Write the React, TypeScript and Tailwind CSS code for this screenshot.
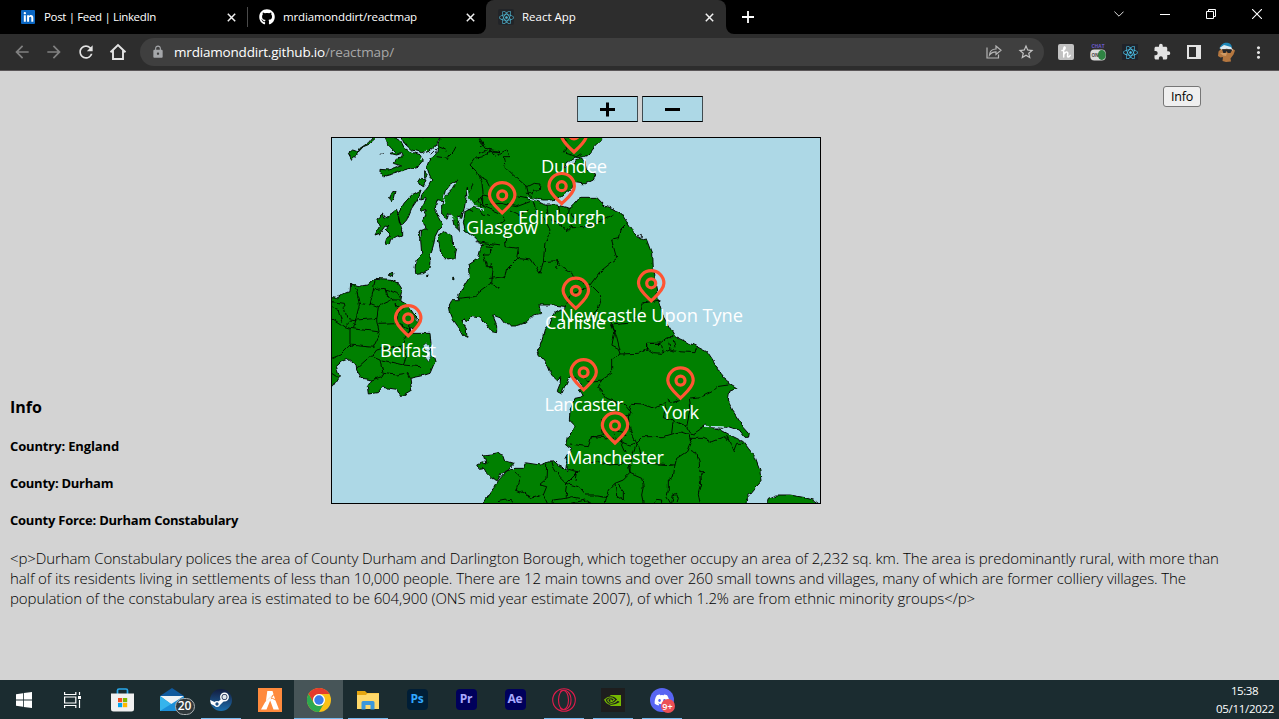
import type { ReactNode } from "react";
import { FaDiscord, FaGithub, FaLinkedinIn, FaReact, FaSteamSymbol } from "react-icons/fa";
import {
  MdArrowBack,
  MdArrowForward,
  MdExtension,
  MdLock,
  MdMoreVert,
  MdOutlineHome,
  MdRefresh,
  MdStarBorder,
} from "react-icons/md";
import { SiNvidia } from "react-icons/si";

/* ---------- Browser chrome ---------- */

function CloseGlyph() {
  return (
    <svg className="size-[9px] shrink-0" viewBox="0 0 9 9" stroke="#f1f1f1" strokeWidth="1.5">
      <path d="M.8.8l7.4 7.4M8.2.8L.8 8.2" />
    </svg>
  );
}

function TabStrip() {
  return (
    <div className="flex h-[34px] bg-black text-[11.5px] text-white">
      <div className="flex w-[247px] items-center pr-[11px] pl-[21px]">
        <span className="flex size-[14px] items-center justify-center rounded-[1px] bg-[#0a66c2]">
          <FaLinkedinIn className="size-[11px]" />
        </span>
        <span className="ml-[9px] flex-1 tracking-[-0.35px] whitespace-nowrap">Post | Feed | LinkedIn</span>
        <CloseGlyph />
      </div>
      <div className="my-[7px] w-px bg-[#4a4a4a]" />
      <div className="flex w-[238px] items-center pr-[11px] pl-[11px]">
        <FaGithub className="size-4" />
        <span className="ml-[8px] flex-1 tracking-[-0.16px] whitespace-nowrap">mrdiamonddirt/reactmap</span>
        <CloseGlyph />
      </div>
      <div className="relative flex w-[240px] items-center rounded-t-[8px] bg-[#2d2d2d] pr-[12px] pl-[12px]">
        <svg className="absolute bottom-0 -left-[8px] size-2" viewBox="0 0 8 8" fill="#2d2d2d">
          <path d="M8 0v8H0a8 8 0 0 0 8-8z" />
        </svg>
        <svg className="absolute -right-[8px] bottom-0 size-2" viewBox="0 0 8 8" fill="#2d2d2d">
          <path d="M0 0v8h8a8 8 0 0 1-8-8z" />
        </svg>
        <span className="flex size-4 items-center justify-center rounded-[2px] bg-[#222428]">
          <FaReact className="size-[15px] text-[#4fb6d1]" />
        </span>
        <span className="ml-[8px] flex-1 whitespace-nowrap">React App</span>
        <CloseGlyph />
      </div>
      <div className="flex flex-1 items-center pl-[16px]">
        <svg className="size-3" viewBox="0 0 12 12" stroke="#fff" strokeWidth="1.8">
          <path d="M6 0v12M0 6h12" />
        </svg>
      </div>
      <div className="flex h-[28px] items-center pr-[17px]">
        <svg className="w-[10px]" viewBox="0 0 10 6" fill="none" stroke="#ddd">
          <path d="M.4.6L5 5.2 9.6.6" />
        </svg>
        <div className="ml-[36px] h-px w-[10px] bg-white" />
        <svg className="ml-[36px] size-[10px]" viewBox="0 0 10 10" fill="none" stroke="#fff">
          <path d="M.5 2.500h7v7h-7zM2.500 2.500v-2h7v7h-2" />
        </svg>
        <svg className="ml-[36px] size-[10px]" viewBox="0 0 10 10" stroke="#fff" strokeWidth="1.1">
          <path d="M0 0l10 10M10 0L0 10" />
        </svg>
      </div>
    </div>
  );
}

function Toolbar() {
  return (
    <div className="flex h-[37px] items-center border-b border-[#5a5658] bg-[#2d2d2d] text-[#e3e3e3]">
      <div className="flex w-[140px] items-center pl-[12px]">
        <MdArrowBack className="size-5 text-[#808080]" />
        <MdArrowForward className="ml-[12px] size-5 text-[#808080]" />
        <MdRefresh className="ml-[12px] size-5" />
        <svg className="ml-[13px] size-[18px]" viewBox="0 0 18 18" fill="none" stroke="currentColor" strokeWidth="1.900">
          <path d="M1.500 9.200L9 2l7.500 7.200M4 7.500V16h10V7.500" />
        </svg>
      </div>
      <div className="flex h-7 w-[904px] items-center rounded-full bg-[#3f3f3f] pr-[9px] pl-[11px]">
        <MdLock className="size-[14px] text-[#a5a7aa]" />
        <p className="mt-px ml-[9px] flex-1 text-[13.5px] leading-none text-[#a8a8a8]">
          <span className="tracking-[-0.19px] text-white">mrdiamonddirt.github.io</span>
          <span className="tracking-[-0.1px]">/reactmap/</span>
        </p>
        <svg className="h-[14px] w-[16px]" viewBox="0 0 16 14" fill="none" stroke="#b5b5b5" strokeWidth="1.2">
          <path d="M1 2.500v10.500h11.500V9.500M3.500 10c.3-4 3-6 6.500-6V1l5 4.300-5 4.200V6.800C7.200 6.800 5 7.800 3.500 10z" />
        </svg>
        <MdStarBorder className="ml-[15px] size-[18px] text-[#c3c3c3]" />
      </div>
      <div className="ml-[14px] flex size-4 items-center justify-center rounded-[2px] bg-[#c1c1c1]">
        <svg className="size-3" viewBox="0 0 12 12" fill="none" stroke="#fff" strokeWidth="1.5" strokeLinecap="round">
          <path d="M2 4.500C4.500 4 5.500 2.500 5 1.300S3.300 2 3.700 5V11M3.800 8.500C5 5.500 8 5 7.800 7.500c-.2 2-.6 3.600.5 3.500.8 0 1.400-.7 1.900-1.600" />
        </svg>
      </div>
      <svg className="ml-4 h-[17px] w-4" viewBox="0 0 16 17">
        <text x="1.500" y="4.300" fontSize="4.800" fontWeight="700" fill="#6a5acd" textLength="13">
          CHAT
        </text>
        <rect x=".3" y="5.500" width="15.400" height="11" rx="4" fill="#dcdcdc" />
        <ellipse cx="11.800" cy="11" rx="3.900" ry="5" fill="#2f8443" />
        <text x="1.400" y="12.900" fontSize="4.500" fontWeight="700" fill="#444">
          ON
        </text>
      </svg>
      <div className="ml-4 flex size-4 items-center justify-center bg-[#20232a]">
        <FaReact className="size-[15px] text-[#4cc6ee]" />
      </div>
      <MdExtension className="ml-[15px] size-[18px]" />
      <svg className="ml-[16px] size-[14px]" viewBox="0 0 14 14">
        <path d="M0 0h14v14H0zM2 2v10h7V2z" fill="#e3e3e3" fillRule="evenodd" />
      </svg>
      <svg className="ml-[15px] size-5" viewBox="0 0 20 20">
        <path d="M5 7L2.500 9.500 2 14l2.500 1.500L7 15l-.5 4 3.500 1 5-.500-.5-3 3-4 1.500-4-3-2z" fill="#b5773f" />
        <path d="M4 11l3 2.500 3 .5 1-3z" fill="#d19a62" />
        <path d="M3.500 6.500C5 1.500 9 0 12.500 1c2.500.7 3.500 3 3.500 5l-5-1.500z" fill="#1d87b8" />
        <path d="M3.500 6L8 3l7 2 2 3.500-6-1.800-5.500.8z" fill="#dfeaf0" />
        <path d="M6 7.300h9.500l.500 1-1.500 2.700h-2.700L10.500 9 9.500 11H7.300z" fill="#22262b" />
      </svg>
      <MdMoreVert className="ml-[13px] size-[19px]" />
    </div>
  );
}

/* ---------- Map ---------- */

type Layer = { dx: number; dy: number; land?: string; lines?: string };

const MAINLAND =
  "M335 0L335 24 325 40 320 70 300 85 290 110 297 130 305 150 295 170 275 195 272 210 290 205 275 230 275 245 290 238 278 270 285 290 292 300 " +
  "275 300 272 330 275 370 258 395 255 415 258 430 280 428 300 415 303 395 300 380 310 350 315 320 325 300 338 285 325 262 315 240 320 212 " +
  "340 215 345 185 360 165 383 150 370 175 345 200 335 225 335 250 350 268 356 250 370 265 375 290 388 302 387 280 380 258 395 262 402 240 408 205 412 172 " +
  "412 200 430 227 458 238 430 232 405 245 400 280 405 300 425 315 440 330 455 345 450 365 445 385 415 405 418 440 405 460 385 500 385 512 365 512 358 525 360 545 " +
  "370 570 388 595 402 618 411 622 409 600 396 575 402 562 408 575 425 560 445 563 465 578 485 605 500 608 500 585 488 555 515 565 530 585 555 585 590 575 610 555 635 550 630 525 670 525 710 530 " +
  "675 550 660 580 645 595 630 650 622 660 630 680 655 710 665 735 680 750 692 740 690 765 682 785 695 792 705 770 720 740 735 740 745 750 755 765 765 775 745 780 760 800 735 805 " +
  "720 840 718 870 738 890 730 905 715 920 710 945 725 955 715 968 705 985 712 1005 710 1025 695 1010 685 1005 670 992 630 1005 585 998 580 1015 555 1015 530 1023 505 1052 495 1070 475 1095 450 1130 " +
  "1248 1130 1250 1105 1270 1080 1293 1055 1290 1020 1275 980 1255 955 1240 935 1200 915 1170 898 1125 888 1180 895 1195 890 1225 900 1245 925 1255 925 1258 910 1240 890 1210 845 1195 810 1200 780 1220 773 1190 755 1170 730 1150 695 1130 665 1090 645 1035 620 " +
  "1000 560 985 510 975 455 967 415 965 370 950 330 940 332 925 325 910 305 890 275 870 245 825 228 800 202 750 202 735 220 720 235 680 225 645 225 605 205 635 210 665 210 690 205 720 180 735 158 765 162 790 150 797 135 770 120 765 95 750 85 700 115 715 95 735 85 760 80 775 75 795 50 815 30 815 0Z";

const LAYERS: Layer[] = [
  {
    dx: 0,
    dy: 0,
    land:
      "M165 20L195 24 215 35 225 55 240 65 270 75 280 90 265 108 240 115 215 122 195 130 165 138 150 128 150 118 175 120 195 115 215 108 190 100 195 85 220 80 215 70 200 75 180 70 195 66 175 45ZM215 20L225 42 245 60 275 68 300 60 318 45 335 20ZM55 70L68 60 85 66 100 50 120 42 145 20 130 20 115 38 90 55 80 75 65 88ZM178 205L188 185 198 183 193 205 183 218ZM135 315L148 290 140 268 160 252 165 262 185 250 200 238 205 262 215 295 215 318 185 328 180 345 165 342 170 325 183 318 165 300 180 290 165 288 150 310ZM205 250L222 220 245 195 273 180 265 205 245 235 230 270 218 283 208 278ZM325 330L332 310 345 303 365 315 368 345 380 355 375 385 350 390 332 370ZM262 318L270 300 268 325ZM174 432L192 427 190 440ZM265 160L275 145 288 150 280 170ZM284 125L292 135 284 142ZM290 433h4v4h-4zM368 442h4v4h-4zM150 74l8-8",
    lines:
      "M510 65L465 55 445 24M510 65L480 65 455 80 435 85 420 105 440 125 455 155 460 195 430 225M430 160L415 190M460 195L480 200M458 195L458 228 510 250M355 80L370 65 378 50M320 80L355 85M325 50L350 60M305 70L320 55M440 335L510 345M455 345L485 350 480 375 460 375 470 410 490 410 485 460 510 475M485 460L430 500 385 505M410 235L430 245M445 205L455 235",
  },
  {
    dx: 450,
    dy: -120,
    lines:
      "M0 190L25 178 50 195 80 180 90 200 70 200 75 230 100 255 140 290 150 330M0 260L20 270 30 290M140 290L160 280 180 282 178 300 160 300 150 330M135 310L155 310M255 190L290 200 305 190M250 145L262 165 250 190M160 335L170 370M200 345L205 380M110 320L160 330M60 340L110 350 150 335M0 315L10 345 60 340M0 145L12 165 0 170M265 355L260 390M235 345L240 370M0 350L10 375 30 380",
  },
  {
    dx: 480,
    dy: 210,
    lines:
      "M40 50L45 65 20 75 15 90M60 30L90 45 115 30M45 100L48 140 85 145 80 175 125 180 150 220 160 185 165 130 180 90 160 50M80 175L50 205 45 230 0 235M0 145L5 160M0 205L5 190M160 185L200 182 215 200 240 215 265 240 300 255 330 215 380 175 365 120 385 115 390 90 410 70M300 255L335 290 325 325 300 355M195 190L205 180 200 205M180 60L210 70 230 95 245 80 290 80 340 60 370 45M200 35L205 70M245 40L260 65M240 290L225 325M300 265L265 270 240 290M450 335L455 310 510 300M365 375L415 370 440 350M365 375L380 410 390 450M510 430L470 430 470 450M442 103l12 0 0 10-8 2z",
  },
  {
    dx: 0,
    dy: 420,
    land: "M0 82L20 85 35 75 60 65 62 42 85 50 110 45 135 25 180 28 205 40 218 60 212 90 230 100 250 130 270 150 262 172 240 178 245 190 300 190 305 240 315 275 300 310 275 318 240 325 245 360 212 380 200 358 160 352 145 368 115 372 112 350 125 330 95 325 80 300 78 285 55 268 35 275 18 290 28 318 8 350 0 355Z",
    lines:
      "M62 42L80 60 88 105 78 145 70 175M88 100L120 105 130 60 135 28M130 60L160 55 200 70 212 80M120 100L145 110 190 90 215 90M145 110L140 150 148 190M5 95L40 100 50 145 80 150 140 145M5 145L45 170 65 150M45 170L60 175 60 225 30 255 5 265M60 175L140 185 150 190M60 225L130 232 150 190M0 110L25 120 35 155M145 160L200 158 205 125 195 100M200 158L240 180 215 225 140 240 125 260 150 270 160 310 200 315 230 310 238 325M80 295L125 255M5 310L20 320M125 330L155 320 160 310M155 270L220 285 270 290M215 225L230 260 220 285M240 160L238 195M165 55L170 75 190 90M195 100L218 120",
  },
  {
    dx: 570,
    dy: 570,
    lines:
      "M270 0L285 35 275 75 295 85 300 102 275 120 275 160 245 180 235 200 260 235 315 255 335 280M300 102L355 100 380 85 400 98 425 100 450 90 475 95 525 98M380 70L420 70 445 50 460 50M380 70L380 85M425 72L430 98M445 60L450 90M460 60L465 85M525 98L530 80M335 250L370 252 400 265 440 250 430 290 460 300M335 250L325 290 330 330 350 370M350 370L370 350 430 350 480 335 510 345 515 360M505 235L540 230 580 210 590 200 625 195M505 235L510 270 500 320 515 345 560 315M460 300L455 340M455 300L500 320M480 240L455 250 440 240M150 372L205 380 215 350 250 345 245 300M215 350L280 355 330 375 345 370M275 270L325 290M285 330L320 345M280 325L285 345M300 355L320 400M350 370L360 400 380 430 465 435 470 415 500 395 510 370 515 355 550 355 575 365 615 350 625 360M620 345L640 395 650 370 670 370M330 460L330 430 350 370M200 430L235 425 270 435 330 430M245 180L200 185 190 165M240 215L240 200",
  },
  {
    dx: 390,
    dy: 930,
    land: "M50 75L65 68 78 72 70 45 95 42 115 38 130 50 135 62 162 70 145 90 125 100 112 122 95 115 80 100 72 85 58 88ZM922 190L925 175 950 165 990 165 1030 172 1060 180 1090 200H922Z",
    lines:
      "M165 93L180 110 168 150 205 165 210 175 250 165 262 190M260 72L258 120 240 135 260 140 250 165M275 62L285 90 300 110 320 130 355 95 325 88M350 95L345 120M320 130L355 140 375 165 410 165 440 170 435 190M320 130L315 175 335 170 360 175M315 175L280 180 275 190M440 170L445 150 465 130 490 120 510 100 545 115 550 140 545 165 550 190M465 130L470 165 490 180 490 155 475 135M510 100L505 75M645 75L640 110 625 120 625 150 620 170 632 190M690 30L710 40 718 70 720 98 735 98 720 108 722 135 715 160 720 190M635 190L640 165 650 160 655 175 650 190M580 190L590 178 605 180 605 190M115 185L150 178 160 188M335 190L375 180 390 190",
  },
];

const SEA_GAPS =
  "M340 222L345 195 365 170 380 157M412 180L415 205 432 229 462 238M360 255L372 268M590 203L640 215 690 214M722 176L765 165M1125 889L1180 891 1210 912M272 90L288 60";

type Place = { name: string; x: number; y: number; left: number; width: number; base: number };

const PLACES: Place[] = [
  { name: "Dundee", x: 574, y: 134.5, left: 541, width: 66, base: 173 },
  { name: "Glasgow", x: 502.2, y: 195.3, left: 466, width: 72, base: 234 },
  { name: "Edinburgh", x: 561.7, y: 186.2, left: 518, width: 88, base: 224 },
  { name: "Belfast", x: 408.2, y: 318.3, left: 380, width: 56, base: 357 },
  { name: "Carlisle", x: 575.8, y: 290.8, left: 545, width: 61, base: 329 },
  { name: "Newcastle Upon Tyne", x: 651.2, y: 283.3, left: 560, width: 183, base: 322 },
  { name: "Lancaster", x: 583.6, y: 372.3, left: 544.5, width: 79, base: 411 },
  { name: "York", x: 680.5, y: 380.6, left: 662, width: 37, base: 419 },
  { name: "Manchester", x: 615, y: 425.5, left: 566, width: 98, base: 464 },
];

function MapView() {
  return (
    <svg className="h-[367px] w-[490px] border border-black bg-[#add8e6]" viewBox="332 138 488 365">
      <defs>
        <filter id="coast" x="-5%" y="-5%" width="110%" height="110%" colorInterpolationFilters="sRGB">
          <feTurbulence type="fractalNoise" baseFrequency="0.14" numOctaves="2" seed="4" />
          <feDisplacementMap in="SourceGraphic" scale="4.5" xChannelSelector="R" yChannelSelector="G" />
        </filter>
      </defs>
      <g filter="url(#coast)">
        <g transform="translate(330 130) scale(.33333)" stroke="#000" strokeWidth="2.800" strokeLinejoin="round">
          <path d={MAINLAND} fill="green" />
          {LAYERS.map((layer, i) => (
            <g key={i} transform={`translate(${layer.dx} ${layer.dy})`}>
              {layer.land && <path d={layer.land} fill="green" />}
              <path d={layer.lines} fill="none" strokeWidth="2.600" />
            </g>
          ))}
          <path d={SEA_GAPS} fill="none" stroke="#add8e6" strokeWidth="4" />
          <path d="M276 650l12-10 12 12 5 28-12 16-10-14 6-12zM252 560l14 6-4 8z" fill="#add8e6" strokeWidth="1.500" />
        </g>
      </g>
      {PLACES.map((p) => (
        <g key={p.name}>
          <g transform={`translate(${p.x} ${p.y})`} fill="none" stroke="#ff5533" strokeWidth="3.200">
            <path d="M0 17.500C-4 13.500-12.700 6.800-12.700 0a12.700 12.700 0 0 1 25.400 0C12.700 6.800 4 13.500 0 17.500z" />
            <circle r="4.500" />
          </g>
          <text x={p.left} y={p.base} textLength={p.width} fontSize="18.300" fill="#fff">
            {p.name}
          </text>
        </g>
      ))}
    </svg>
  );
}

/* ---------- Page ---------- */

function ZoomButton({ label, children }: { label: string; children: ReactNode }) {
  return (
    <button
      aria-label={label}
      className="flex h-[26px] w-[61px] items-center justify-center border border-x-[#3f4b50] border-y-black bg-[#add8e6]"
    >
      <svg className="size-[15px]" viewBox="0 0 15 15" stroke="#000" strokeWidth="3">
        {children}
      </svg>
    </button>
  );
}

function Page() {
  return (
    <main className="h-[609px] overflow-hidden bg-[#d3d3d3] text-black">
      <div className="grid h-[51px] grid-cols-[1fr_auto_1fr] items-start pt-[15px]">
        <div />
        <div className="mt-[10px] flex gap-[4px]">
          <ZoomButton label="Zoom in">
            <path d="M7.500 .500v14M0 7.500h15" />
          </ZoomButton>
          <ZoomButton label="Zoom out">
            <path d="M0 7.500h15" />
          </ZoomButton>
        </div>
        <button className="mr-[78px] flex h-[21px] w-[38px] items-center justify-center justify-self-end rounded-[3px] border border-[#767676] bg-[#efefef] pt-px text-[12.5px] leading-none tracking-[-0.2px]">
          Info
        </button>
      </div>
      <section className="mt-[15px] flex h-[367px] items-start">
        <div className="w-[331px] pt-[259px] pl-[10px] text-[13px] leading-[18px] font-bold">
          <h4 className="text-[16px] leading-[22px]">Info</h4>
          <h5 className="mt-[19px] tracking-[-0.14px]">Country: England</h5>
          <h5 className="mt-[19px] tracking-[-0.26px]">County: Durham</h5>
          <h5 className="mt-[19px] tracking-[-0.23px]">County Force: Durham Constabulary</h5>
        </div>
        <MapView />
      </section>
      <p className="mt-[44px] pl-[10px] text-[15px] leading-[20px] font-light whitespace-nowrap">
        <span className="block tracking-[-0.108px]">
          {"<p>Durham Constabulary polices the area of County Durham and Darlington Borough, which together occupy an area of 2,232 sq. km. The area is predominantly rural, with more than"}
        </span>
        <span className="block tracking-[-0.103px]">
          half of its residents living in settlements of less than 10,000 people. There are 12 main towns and over 260
          small towns and villages, many of which are former colliery villages. The
        </span>
        <span className="block tracking-[-0.085px]">
          {"population of the constabulary area is estimated to be 604,900 (ONS mid year estimate 2007), of which 1.2% are from ethnic minority groups</p>"}
        </span>
      </p>
    </main>
  );
}

/* ---------- Taskbar ---------- */

function Task({ open, active, children }: { open?: boolean; active?: boolean; children: ReactNode }) {
  return (
    <div className={active ? "flex w-[49px] flex-col items-center bg-[#475558]" : "flex w-[49px] flex-col items-center"}>
      <div className="flex h-[38px] flex-col items-center justify-center pt-[2px]">{children}</div>
      <div className={open ? "h-px w-10 bg-[#76b9ed]" : active ? "h-px w-full bg-[#76b9ed]" : "h-px"} />
    </div>
  );
}

function Adobe({ className, children }: { className: string; children: ReactNode }) {
  return (
    <div className={`mr-[-1px] mb-[2px] flex size-[21px] items-center justify-center rounded-[4px] text-[12px] leading-none font-bold tracking-[-0.3px] ${className}`}>
      {children}
    </div>
  );
}

function Taskbar() {
  return (
    <footer className="flex h-[39px] bg-[#1b2c30] text-white">
      <Task>
        <svg className="mr-px size-4" viewBox="0 0 16 16" fill="#fff">
          <path d="M0 2.200L7 1.200v6.400H0zM7.800 1.100L16 0v7.600H7.800zM0 8.400h7v6.400L0 13.800zM7.800 8.400H16V16l-8.200-1.100z" />
        </svg>
      </Task>
      <Task>
        <svg className="mr-[3px] h-4 w-[17px]" viewBox="0 0 17 16" fill="none" stroke="#fff" strokeWidth="1.200">
          <path d="M.6 0v2.500h11.200V0M.6 5h11.200v6H.6zM.6 16v-2.500h11.200V16M15.500 0v3M15.500 8v8" />
          <path d="M14 5.500h3" strokeWidth="3" />
        </svg>
      </Task>
      <Task>
        <svg className="h-[24px] w-[23px]" viewBox="0 0 23 24">
          <path d="M6.500 6V2.500a1.500 1.500 0 0 1 1.500-1.500h7a1.500 1.500 0 0 1 1.500 1.500V6" fill="none" stroke="#28a8ea" strokeWidth="1.700" />
          <path d="M0 5.500h23V21a2.500 2.500 0 0 1-2.500 2.500h-18A2.500 2.500 0 0 1 0 21z" fill="#f1f1f1" />
          <path d="M7 10h4.200v4.200H7z" fill="#f25022" />
          <path d="M12 10h4.200v4.200H12z" fill="#7fba00" />
          <path d="M7 15h4.200v4.200H7z" fill="#00a4ef" />
          <path d="M12 15h4.200v4.200H12z" fill="#ffb900" />
        </svg>
      </Task>
      <Task>
        <div className="relative mb-[2px]">
          <svg className="h-[23px] w-[24px]" viewBox="0 0 24 23">
            <path d="M0 8L12 0l12 8v15H0z" fill="#0f5a9e" />
            <path d="M0 8h24L12 17z" fill="#eef3f6" />
            <path d="M0 8l12 8.500V23H0z" fill="#35b4ec" />
            <path d="M24 8L0 23h24z" fill="#1b8fd8" />
          </svg>
          <span className="absolute top-[10px] left-[15px] flex h-[17px] w-[20px] items-center justify-center rounded-full border border-[#aab0b2] bg-[#30393c] text-[12px] leading-none font-semibold">
            20
          </span>
        </div>
      </Task>
      <Task open>
        <div className="flex size-[22px] items-center justify-center rounded-full bg-linear-to-b from-[#111d3f] to-[#1a6fae]">
          <svg className="size-[22px]" viewBox="0 0 22 22" fill="none">
            <path d="M0 11l7 3 5-5 3 2-5 5-4 1.500L1 15z" fill="#fff" />
            <circle cx="14.500" cy="8" r="3.700" fill="#1b2b50" stroke="#fff" strokeWidth="1.500" />
            <circle cx="14.500" cy="8" r="2.200" fill="#dfe6ec" />
            <circle cx="7" cy="15" r="2.300" fill="#1d4f82" stroke="#fff" strokeWidth="1.300" />
          </svg>
        </div>
      </Task>
      <Task>
        <svg className="size-6" viewBox="0 0 24 24">
          <path d="M0 0h24v24H0z" fill="#ff8a3d" />
          <path d="M9.300 3h5.200l1 3.200-7.600 7zM15.800 7.200l1.300 4-3.200-1.700zM3 21.500L7.200 14 14 8 8.500 21.500zM12 12l2-1.500 3.500 2L21 21.500h-5.500z" fill="#fff" />
        </svg>
      </Task>
      <Task active>
        <svg className="size-6" viewBox="0 0 24 24">
          <circle cx="12" cy="12" r="12" fill="#fbc116" />
          <path d="M1.600 6A12 12 0 0 1 22.400 6H12a6 6 0 0 0-5.200 9z" fill="#e33b2e" />
          <path d="M1.600 6A12 12 0 0 0 12 24l5.200-9a6 6 0 0 1-10.400 0z" fill="#2da94f" />
          <circle cx="12" cy="12" r="6" fill="#fff" />
          <circle cx="12" cy="12" r="4.700" fill="#397de8" />
        </svg>
      </Task>
      <Task open>
        <svg className="h-[19px] w-[22px]" viewBox="0 0 22 19">
          <path d="M0 0h8l2 2h12v16H0z" fill="#e5a50f" />
          <path d="M0 4h9l1.500-1.700H22V18H0z" fill="#ffd869" />
          <path d="M4.500 18.500v-7q0-1.500 1.500-1.500h10q1.500 0 1.500 1.500v7h-4V14h-5v4.500z" fill="#3b97dc" />
        </svg>
      </Task>
      <Task>
        <Adobe className="bg-[#001e36] text-[#31a8ff]">Ps</Adobe>
      </Task>
      <Task>
        <Adobe className="bg-[#00005b] text-[#a9a9ff]">Pr</Adobe>
      </Task>
      <Task>
        <Adobe className="bg-[#00005b] text-[#a9a9ff]">Ae</Adobe>
      </Task>
      <Task open>
        <svg className="size-6" viewBox="0 0 24 24" fill="none" stroke="#e01c4b" strokeWidth="1.100">
          <circle cx="12" cy="12" r="11.300" />
          <ellipse cx="11.500" cy="12" rx="5" ry="9.500" />
          <path d="M8 3.500C14.500 0 19 5 19 12s-4.500 12-11 8.500" />
        </svg>
      </Task>
      <Task open>
        <div className="flex size-6 items-center justify-center bg-[#1e1e1e]">
          <SiNvidia className="size-[17px] text-[#76b900]" />
        </div>
      </Task>
      <Task open>
        <div className="relative flex size-6 items-center justify-center rounded-full bg-[#5865f2]">
          <FaDiscord className="size-[16px]" />
          <span className="absolute top-[11px] left-[11px] flex size-[14px] items-center justify-center rounded-full bg-[#ed4f55] text-[9px] leading-none font-semibold">
            9+
          </span>
        </div>
      </Task>
      <div className="ml-auto flex flex-col items-end pt-[2px] pr-[5px] text-[11.5px] leading-[18px]">
        <span className="pr-[16px] tracking-[-0.46px]">15:38</span>
        <span className="tracking-[-0.3px]">05/11/2022</span>
      </div>
    </footer>
  );
}

export default function App() {
  return (
    <div className="flex h-[719px] w-[1279px] flex-col overflow-hidden font-['Open_Sans','Noto_Sans',sans-serif]">
      <TabStrip />
      <Toolbar />
      <Page />
      <Taskbar />
    </div>
  );
}
